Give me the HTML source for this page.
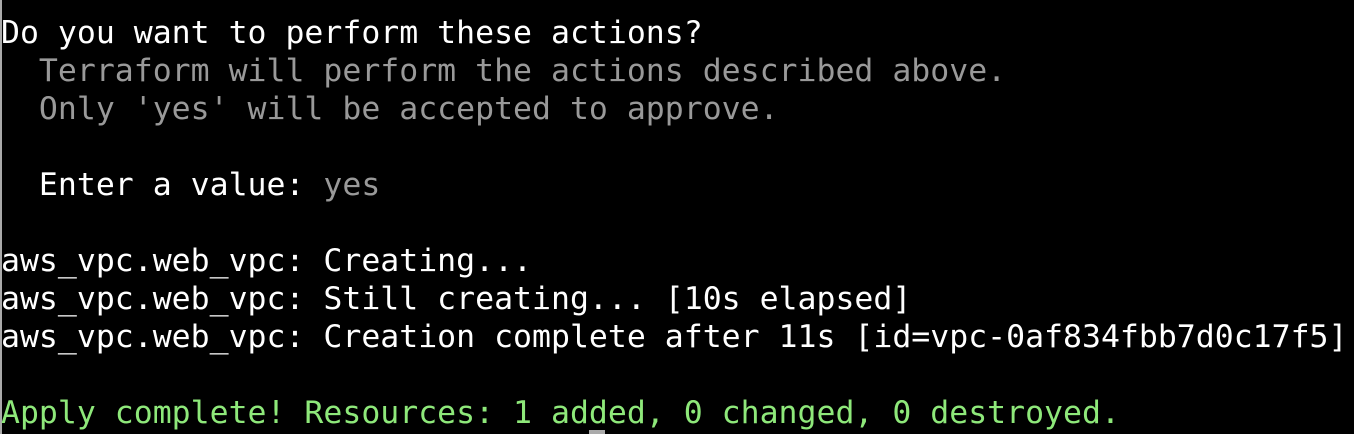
<!DOCTYPE html>
<html><head><style>
html,body{margin:0;padding:0;background:#000;width:1354px;height:434px;overflow:hidden}
body{border-left:2px solid #aaa;box-sizing:border-box;position:relative}
pre{margin:0;position:absolute;left:-1px;top:14px;font-family:"DejaVu Sans Mono","Liberation Mono",monospace;font-size:31.5px;line-height:38px;color:#fff}
.g{color:#999}.gr{color:#8ee87a}
.cur{position:absolute;left:587px;top:430px;width:16px;height:4px;background:#aaa}
</style></head><body><pre>Do you want to perform these actions?
<span class="g">  Terraform will perform the actions described above.
  Only 'yes' will be accepted to approve.</span>

  Enter a value: <span class="g">yes</span>

aws_vpc.web_vpc: Creating...
aws_vpc.web_vpc: Still creating... [10s elapsed]
aws_vpc.web_vpc: Creation complete after 11s [id=vpc-0af834fbb7d0c17f5]

<span class="gr">Apply complete! Resources: 1 added, 0 changed, 0 destroyed.</span></pre><div class="cur"></div></body></html>
